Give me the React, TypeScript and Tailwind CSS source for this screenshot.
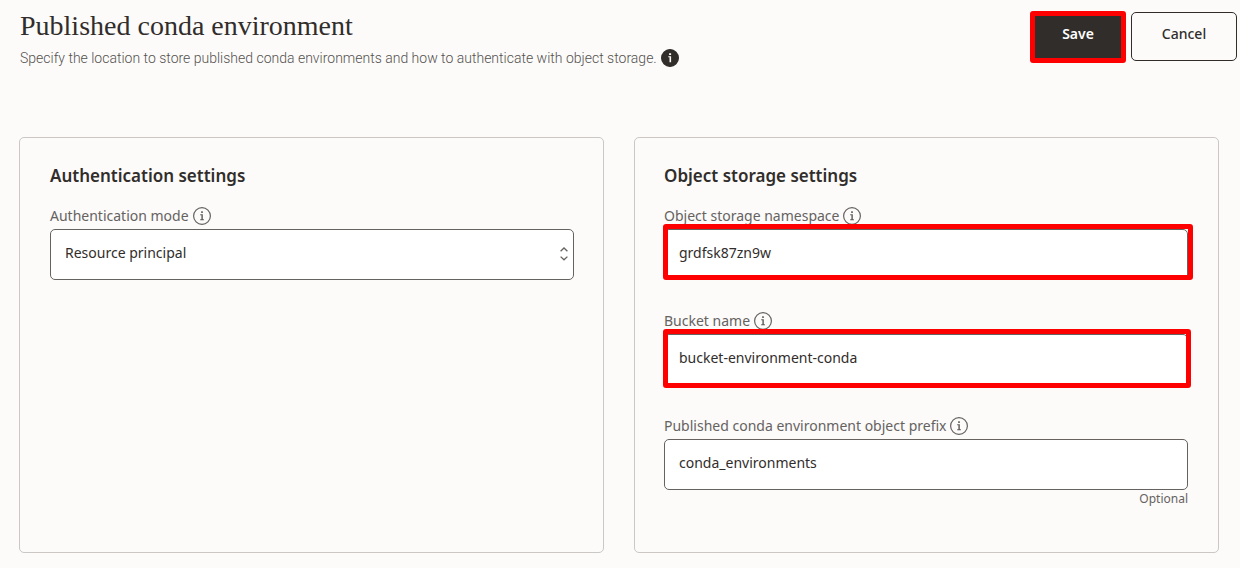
import { useState } from "react";

function InfoIcon({ label, solid = false }: { label: string; solid?: boolean }) {
  return (
    <button type="button" aria-label={label} className="h-[18px] w-[18px] shrink-0">
      <svg viewBox="0 0 18 18" className="h-[18px] w-[18px]" fill="none">
        <circle
          cx="9"
          cy="9"
          r="8.4"
          fill={solid ? "#312d2a" : "none"}
          stroke={solid ? "#312d2a" : "#66625f"}
          strokeWidth="1.2"
        />
        {solid ? (
          <path d="M8.1 4.3h2v1.6h-2zM7.3 7.2h2.8v6H8.5V8.3H7.3z" fill="#fcfbfa" />
        ) : (
          <path d="M8.2 4.3h1.6v1.6H8.2zM7.2 7.2h2.6v5h1.1v1.1H7.2v-1.1h1.2V8.2H7.2z" fill="#5b5754" />
        )}
      </svg>
    </button>
  );
}

function Highlight({ className }: { className: string }) {
  return (
    <span
      aria-hidden="true"
      className={`pointer-events-none absolute rounded-[3px] border-[5px] border-[#ff0000] ${className}`}
    />
  );
}

function FieldLabel({ id, text }: { id: string; text: string }) {
  return (
    <div className="flex h-6 items-center gap-1 pb-[2px]">
      <label htmlFor={id} className="text-[14px] leading-[22px] text-[#66625f]">
        {text}
      </label>
      <InfoIcon label={`About ${text.toLowerCase()}`} />
    </div>
  );
}

const controlClass =
  "block h-[51px] w-full appearance-none rounded-[5px] border border-[#66625f] bg-white px-[14px] pb-[5px] text-[14px] text-[#312d2a] outline-none";

function TextField({
  id,
  label,
  initial,
  highlight,
}: {
  id: string;
  label: string;
  initial: string;
  highlight?: string;
}) {
  const [value, setValue] = useState(initial);
  return (
    <div>
      <FieldLabel id={id} text={label} />
      <div className="relative">
        <input id={id} type="text" value={value} onChange={(e) => setValue(e.target.value)} className={controlClass} />
        {highlight && <Highlight className={highlight} />}
      </div>
    </div>
  );
}

const cardClass = "rounded-[5px] border border-[#cac7c5] pt-[26px] pb-[44px]";
const headingClass = "mb-[17px] text-[17px] leading-6 font-semibold text-[#312d2a]";

export default function App() {
  return (
    <main className="min-h-screen bg-[#fcfbfa] pb-[15px] font-['Noto_Sans','Open_Sans',sans-serif]">
      <header className="flex h-[137px] items-start justify-between gap-4 pt-[10px] pr-[3px] pl-5">
        <div>
          <h1 className="font-['Liberation_Serif',serif] text-[28px] leading-8 text-[#312d2a]">
            Published conda environment
          </h1>
          <div className="mt-1 flex items-center gap-1">
            <p className="font-['Roboto',sans-serif] text-[14px] leading-6 font-light text-[#55514e]">
              Specify the location to store published conda environments and how to authenticate with object storage.
            </p>
            <InfoIcon solid label="About published conda environments" />
          </div>
        </div>
        <div className="flex gap-[5px] pt-[2px]">
          <div className="relative">
            <button
              type="button"
              className="h-[49px] w-24 rounded-[5px] bg-[#312d2a] pb-[7px] text-[14px] font-semibold text-white"
            >
              Save
            </button>
            <Highlight className="-top-px right-0 -bottom-[2px] left-0" />
          </div>
          <button
            type="button"
            className="h-[49px] w-[106px] rounded-[5px] border border-[#312d2a] pb-[7px] text-[14px] font-medium text-[#312d2a]"
          >
            Cancel
          </button>
        </div>
      </header>

      <div className="grid grid-cols-2 gap-[30px] pr-[21px] pl-[19px]">
        <section className={`${cardClass} pr-[29px] pl-[30px]`}>
          <h2 className={headingClass}>Authentication settings</h2>
          <FieldLabel id="auth-mode" text="Authentication mode" />
          <div className="relative">
            <select id="auth-mode" defaultValue="resource" className={controlClass}>
              <option value="resource">Resource principal</option>
            </select>
            <svg
              viewBox="0 0 8 14"
              aria-hidden="true"
              className="pointer-events-none absolute top-[18px] right-[6px] h-[14px] w-2"
              fill="none"
              stroke="#66625f"
              strokeWidth="1.3"
            >
              <path d="M.6 4.2 4 1l3.4 3.2M.6 9.6 4 12.8l3.4-3.2" />
            </svg>
          </div>
        </section>

        <section className={`${cardClass} pr-[30px] pl-[29px]`}>
          <h2 className={headingClass}>Object storage settings</h2>
          <div className="flex flex-col gap-[30px]">
            <TextField
              id="namespace"
              label="Object storage namespace"
              initial="grdfsk87zn9w"
              highlight="-top-[5px] -right-[5px] bottom-0 -left-px"
            />
            <TextField
              id="bucket"
              label="Bucket name"
              initial="bucket-environment-conda"
              highlight="-top-[5px] -right-[3px] -bottom-[3px] -left-px"
            />
            <TextField id="prefix" label="Published conda environment object prefix" initial="conda_environments" />
          </div>
          <p className="text-right text-[12px] leading-[18px] text-[#66625f]">Optional</p>
        </section>
      </div>
    </main>
  );
}
